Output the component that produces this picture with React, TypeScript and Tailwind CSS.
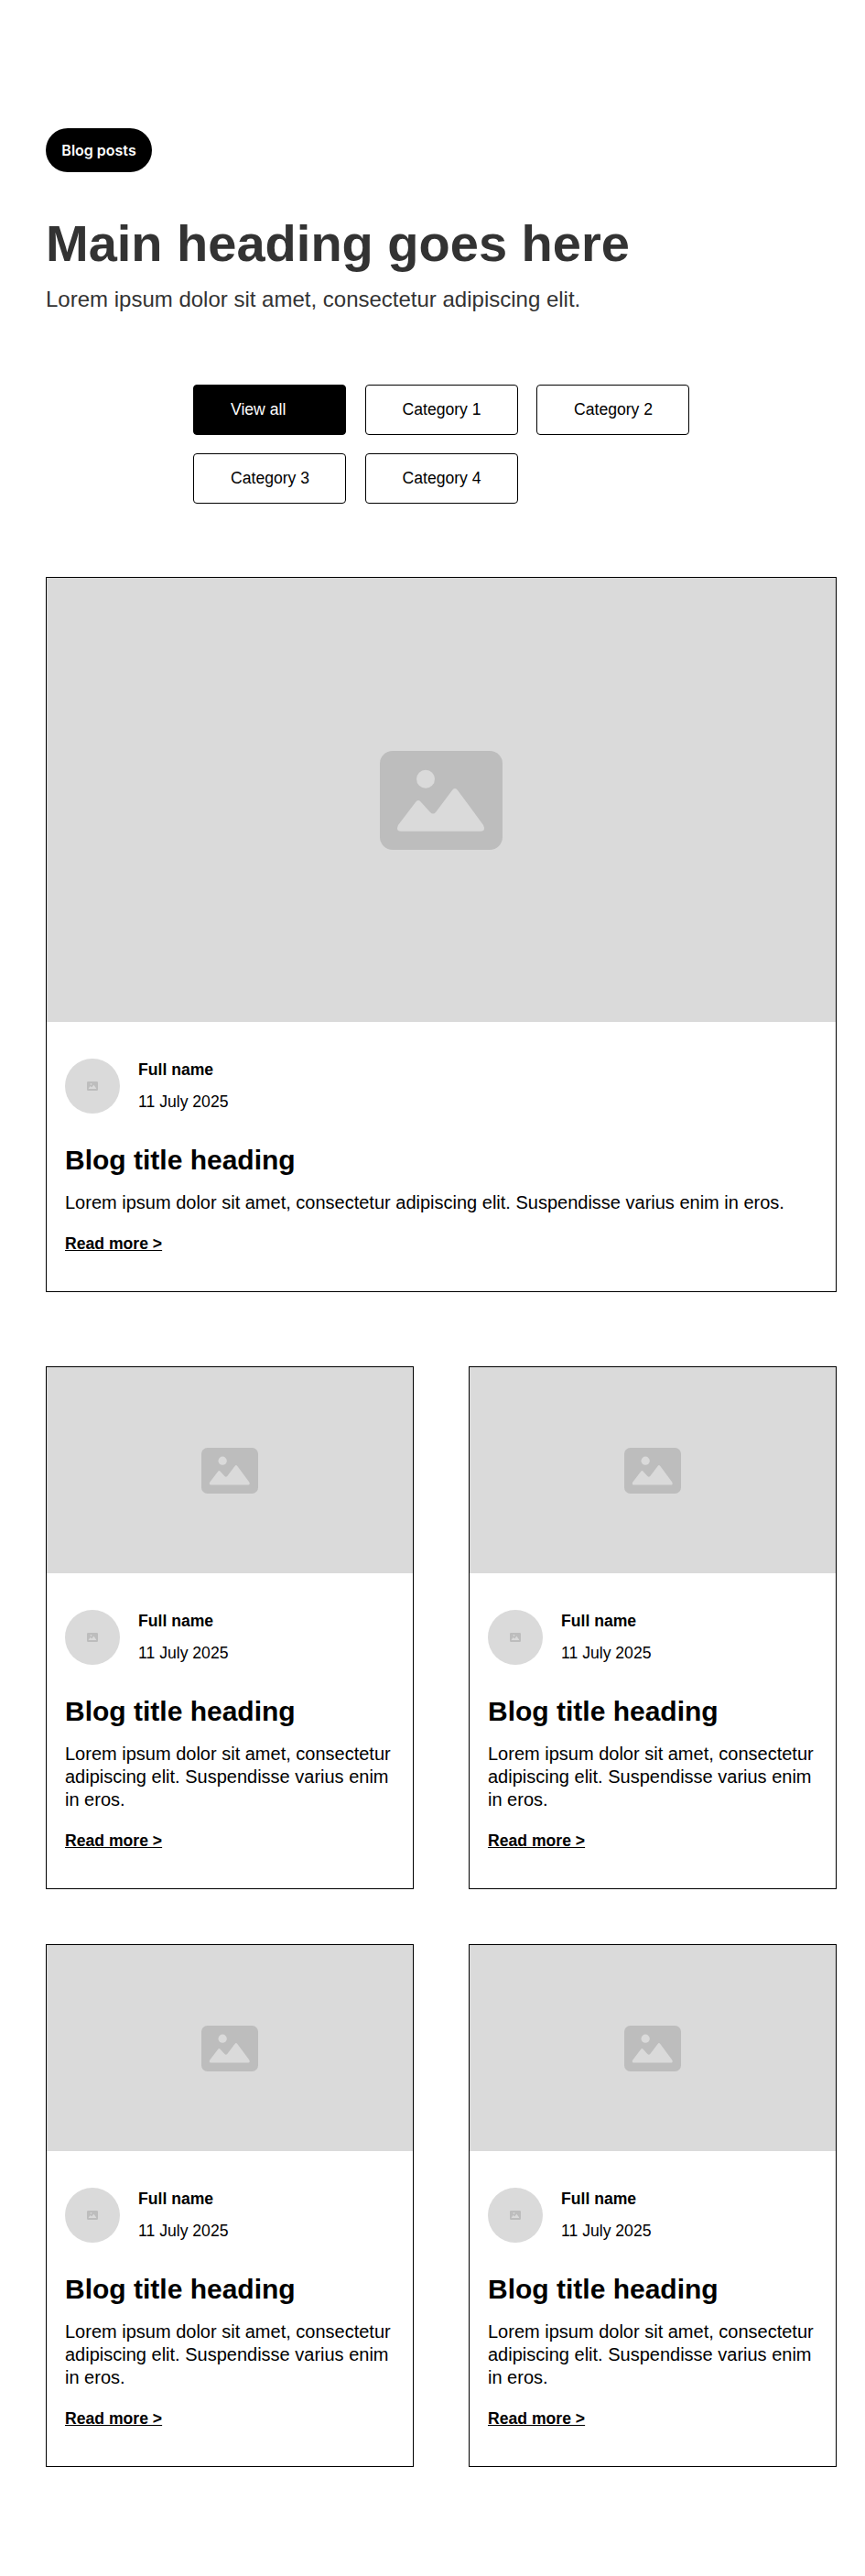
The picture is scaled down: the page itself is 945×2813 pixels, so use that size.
const font = "font-['Liberation_Sans',Arial,sans-serif]";

function PlaceholderIcon({ className }: { className: string }) {
  return (
    <svg viewBox="0 0 134 108" className={className} preserveAspectRatio="none" aria-hidden="true">
      <rect x="0" y="0" width="134" height="108" rx="14" fill="#bdbdbd" />
      <circle cx="50" cy="30.7" r="10" fill="#dadada" />
      <path
        d="M20 81 L39 56 Q42 52 45 56 L55 67 Q58 70 61 67 L79 43 Q82 39 85 43 L113 81 Q116 87.7 110 87.7 L23 87.7 Q17 87.7 20 81 Z"
        fill="#dadada"
      />
    </svg>
  );
}

function Body() {
  return (
    <div className="px-5 pt-10 pb-10">
      <div className="flex gap-5">
        <div className="flex h-[60px] w-[60px] items-center justify-center rounded-full bg-[#dadada]">
          <PlaceholderIcon className="h-[10px] w-[12px]" />
        </div>
        <div className="text-[17.6px] leading-6 text-black">
          <div className="font-bold">Full name</div>
          <div className="mt-[11px]">11 July 2025</div>
        </div>
      </div>
      <h3 className="mt-[33px] text-[30px] leading-9 font-bold text-black">Blog title heading</h3>
      <p className="mt-4 text-[20px] leading-[25px] text-black">
        Lorem ipsum dolor sit amet, consectetur adipiscing elit. Suspendisse varius enim in eros.
      </p>
      <a className="mt-5 block w-fit text-[17.6px] leading-6 font-bold text-black underline">Read more &gt;</a>
    </div>
  );
}

function SmallCard() {
  return (
    <article className="border border-black bg-white">
      <div className="flex h-[225px] items-center justify-center bg-[#dadada]">
        <PlaceholderIcon className="h-[50px] w-[62px]" />
      </div>
      <Body />
    </article>
  );
}

const categories = ["Category 1", "Category 2", "Category 3", "Category 4"];

export default function App() {
  return (
    <main className={`${font} bg-white pt-[140px] pr-[31px] pb-[119px] pl-[50px]`}>
      <span className="flex h-12 w-[116px] items-center justify-center rounded-3xl bg-black font-['Inter',sans-serif] text-[16px] font-semibold text-white">
        Blog posts
      </span>
      <h1 className="mt-11 text-[56px] leading-[67px] font-bold text-[#333333]">Main heading goes here</h1>
      <p className="mt-3 text-[24px] leading-8 text-[#333333]">Lorem ipsum dolor sit amet, consectetur adipiscing elit.</p>

      <div className="mx-auto mt-[77px] grid w-[542px] grid-cols-[167px_167px_167px] gap-x-[20.5px] gap-y-5">
        <button className="h-[55px] rounded border border-black bg-black px-10 text-left text-[17.6px] text-white">View all</button>
        {categories.map((c) => (
          <button key={c} className="h-[55px] rounded border border-black bg-white px-10 text-left text-[17.6px] whitespace-nowrap text-black">
            {c}
          </button>
        ))}
      </div>

      <article className="mt-20 border border-black bg-white">
        <div className="flex h-[485px] items-center justify-center bg-[#dadada]">
          <PlaceholderIcon className="h-[108px] w-[134px]" />
        </div>
        <Body />
      </article>

      <div className="mt-[81px] grid grid-cols-2 gap-[60px]">
        <SmallCard />
        <SmallCard />
        <SmallCard />
        <SmallCard />
      </div>
    </main>
  );
}
